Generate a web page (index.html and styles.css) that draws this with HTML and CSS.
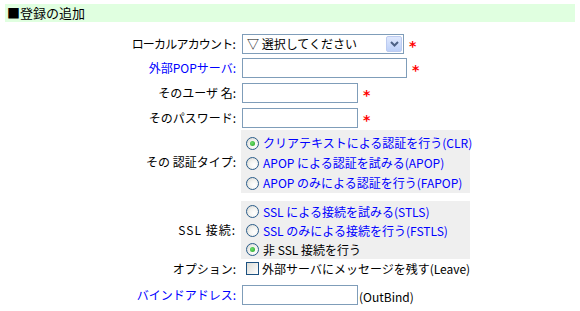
FILE: index.html
```html
<!DOCTYPE html>
<html lang="ja">
<head>
<meta charset="utf-8">
<link rel="stylesheet" href="styles.css">
</head>
<body>
<div class="title">■登録の追加</div>
<div class="form">
  <div class="row r1">
    <div class="label tight">ローカルアカウント:</div>
    <div class="field">
      <div class="select"><span class="sel-text">▽ 選択してください</span><span class="sel-btn"><svg width="9" height="6" viewBox="0 0 9 6"><path d="M1 1 L4.5 4.5 L8 1" fill="none" stroke="#4d6185" stroke-width="2"/></svg></span></div>
      <span class="req">*</span>
    </div>
  </div>
  <div class="row r2">
    <div class="label blue">外部POPサーバ:</div>
    <div class="field"><span class="input wide"></span><span class="req">*</span></div>
  </div>
  <div class="row r3">
    <div class="label">そのユーザ 名:</div>
    <div class="field"><span class="input"></span><span class="req">*</span></div>
  </div>
  <div class="row r4">
    <div class="label">そのパスワード:</div>
    <div class="field"><span class="input"></span><span class="req">*</span></div>
  </div>
  <div class="row r5">
    <div class="label">その 認証タイプ:</div>
    <div class="box b1">
      <div class="opt blue"><span class="radio on"></span>クリアテキストによる認証を行う(CLR)</div>
      <div class="opt blue"><span class="radio"></span>APOP による認証を試みる(APOP)</div>
      <div class="opt blue"><span class="radio"></span>APOP のみによる認証を行う(FAPOP)</div>
    </div>
  </div>
  <div class="row r6">
    <div class="label wide-latin">SSL 接続:</div>
    <div class="box b2">
      <div class="opt blue"><span class="radio"></span>SSL による接続を試みる(STLS)</div>
      <div class="opt blue"><span class="radio"></span>SSL のみによる接続を行う(FSTLS)</div>
      <div class="opt"><span class="radio on"></span>非 SSL 接続を行う</div>
    </div>
  </div>
  <div class="row r7">
    <div class="label">オプション:</div>
    <div class="opt"><span class="check"></span>外部サーバにメッセージを残す(Leave)</div>
  </div>
  <div class="row r8">
    <div class="label blue">バインドアドレス:</div>
    <div class="field"><span class="input"></span><span class="note">(OutBind)</span></div>
  </div>
</div>
</body>
</html>
```

FILE: styles.css
```css
html, body {
  margin: 0;
  padding: 0;
  background: #ffffff;
}
body {
  font-family: "Noto Sans CJK JP", "Noto Sans", sans-serif;
  font-size: 12px;
  color: #000000;
  width: 580px;
  height: 311px;
  overflow: hidden;
}
.title {
  margin: 4px 5px 0 5px;
  height: 18px;
  line-height: 18px;
  background: #e0ffe0;
  font-size: 13px;
  padding-left: 2px;
}
.row {
  display: flex;
  align-items: center;
}
.label {
  width: 236px;
  flex: none;
  text-align: right;
  white-space: nowrap;
  line-height: 16px;
}
.label.tight {
  letter-spacing: -0.8px;
  padding-right: 1px;
  box-sizing: border-box;
}
.label.wide-latin {
  letter-spacing: 1px;
}
.blue {
  color: #0000ff;
}
.field {
  display: flex;
  align-items: center;
  margin-left: 6px;
}
.r1 { margin-top: 12px; }
.r2 { margin-top: 4px; }
.r3 { margin-top: 5px; }
.r4 { margin-top: 5px; }
.r5 { margin-top: 2px; }
.r6 { margin-top: 8px; }
.r7 { height: 19px; }
.r8 { margin-top: 7px; }
.select {
  box-sizing: border-box;
  width: 162px;
  height: 20px;
  border: 1px solid #7f9db9;
  background: #fff;
  display: flex;
  align-items: center;
  justify-content: space-between;
  padding: 1px;
}
.sel-text {
  padding-left: 3px;
  line-height: 16px;
}
.sel-btn {
  box-sizing: border-box;
  width: 16px;
  height: 16px;
  border: 1px solid #bccbf0;
  border-radius: 2px;
  background: linear-gradient(#dfe8fd, #bcd0f9);
  display: flex;
  align-items: center;
  justify-content: center;
}
.input {
  box-sizing: border-box;
  display: block;
  width: 116px;
  height: 20px;
  border: 1px solid #7f9db9;
  background: #fff;
}
.input.wide {
  width: 165px;
}
.req {
  color: #ff0000;
  font-weight: bold;
  font-size: 14px;
  line-height: 14px;
  margin-left: 5px;
  padding-top: 4px;
  font-family: "DejaVu Sans", sans-serif;
}
.box {
  margin-left: 5px;
  background: #efefef;
  width: 229px;
  box-sizing: border-box;
  padding-left: 5px;
}
.b1 {
  padding-top: 3px;
  height: 63px;
}
.b2 {
  padding-top: 1px;
  height: 58px;
}
.b1 .opt { height: 20px; }
.b2 .opt { height: 19px; }
.opt {
  display: flex;
  align-items: center;
  white-space: nowrap;
  line-height: 16px;
}
.r7 .opt {
  margin-left: 10px;
}
.radio {
  box-sizing: border-box;
  width: 13px;
  height: 13px;
  border-radius: 50%;
  border: 1px solid #2a5c8a;
  background: radial-gradient(circle at 65% 65%, #ffffff 0%, #f3f3f0 45%, #d2d2cc 100%);
  margin-right: 4px;
  position: relative;
  flex: none;
}
.radio.on::after {
  content: "";
  position: absolute;
  left: 3px;
  top: 3px;
  width: 5px;
  height: 5px;
  border-radius: 50%;
  background: radial-gradient(circle at 40% 40%, #6fe06f, #21a121);
}
.check {
  box-sizing: border-box;
  width: 13px;
  height: 13px;
  border: 1px solid #1c5180;
  background: linear-gradient(135deg, #dcdcd6, #ffffff);
  margin-right: 3px;
  flex: none;
}
.note {
  margin-left: 1px;
  padding-top: 3px;
}
```
